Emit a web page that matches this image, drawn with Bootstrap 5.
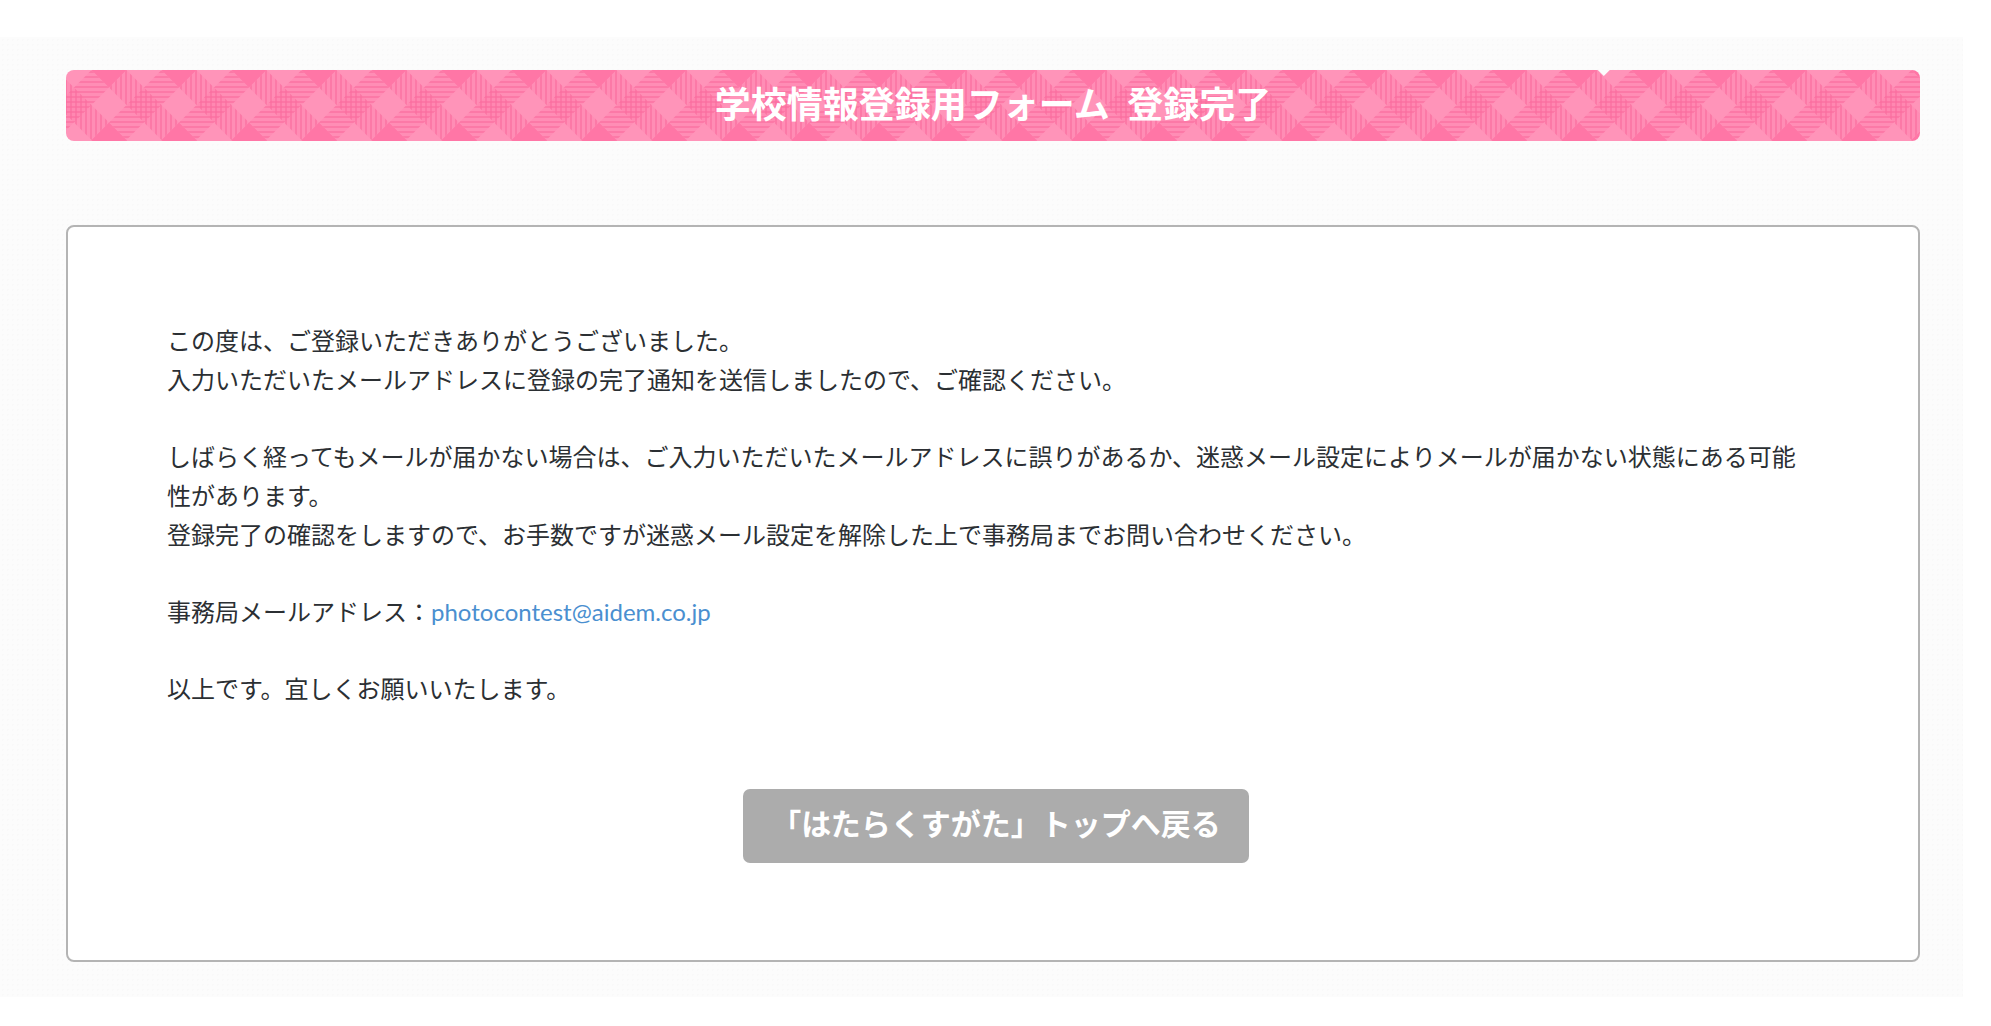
<!DOCTYPE html>
<html lang="ja">
<head>
<meta charset="utf-8">
<meta name="viewport" content="width=device-width, initial-scale=1">
<title>学校情報登録用フォーム 登録完了</title>
<link href="https://cdn.jsdelivr.net/npm/bootstrap@5.3.0/dist/css/bootstrap.min.css" rel="stylesheet">
<style>
  body {
    background: #fff;
    color: #2b2f33;
    font-family: Lato, "Noto Sans CJK JP", sans-serif;
    font-size: 24px;
    line-height: 39px;
  }
  .page-sheet {
    margin: 37px 28px 26px 0;
    padding: 33px 43px 35px 66px;
    background-color: #fcfcfc;
    background-image: radial-gradient(#f9f9f9 1px, transparent 1px);
    background-size: 5px 5px;
  }
  /* Diagonal gingham ribbon, 70px repeat */
  .title-ribbon {
    min-height: 71px;
    margin-bottom: 84px;
    border-radius: 8px;
    background: #ff94b9 url("data:image/svg+xml,%3Csvg xmlns='http://www.w3.org/2000/svg' width='70' height='70'%3E%3Cdefs%3E%3Cpattern id='h' width='5' height='5' patternUnits='userSpaceOnUse'%3E%3Cpath d='M0 1h5v2H0z' fill='%23fa6c9e' fill-opacity='.6'/%3E%3C/pattern%3E%3Cpattern id='v' width='5' height='5' patternUnits='userSpaceOnUse'%3E%3Cpath d='M1 0h2v5H1z' fill='%23fa6c9e' fill-opacity='.6'/%3E%3C/pattern%3E%3C/defs%3E%3Cpath d='M27 0h36L45 18zM27 70h36L45 52z' fill='%23ff76a6'/%3E%3Cpath d='M10 17.500L27.500 0 45 17.500 27.500 35 45 52.500 27.500 70 10 52.500 27.500 35zM45 17.500L62.500 0 70 7.500V27.500L62.500 35 70 42.500V62.500L62.500 70 45 52.500 62.500 35zM0 7.500L10 17.500 0 27.500zM0 42.500L10 52.500 0 62.500z' fill='%23ff8db5'/%3E%3Cpath d='M10 17.500L27.500 35 10 52.500 0 42.500V27.500zM70 27.500L62.500 35 70 42.500z' fill='%23ff88b1'/%3E%3Cpath d='M10 17.500L27.500 0 45 17.500 27.500 35 10 52.500 0 42.500V27.500zM45 52.500L62.500 35 70 42.500V62.500L62.500 70zM0 42.500L10 52.500 0 62.500zM70 27.500L62.500 35 70 42.500z' fill='url(%23h)'/%3E%3Cpath d='M45 17.500L62.500 0 70 7.500V42.500L62.500 35zM0 7.500L10 17.500 27.500 35 45 52.500 27.500 70 10 52.500 0 42.500z' fill='url(%23v)'/%3E%3C/svg%3E") -2px 0;
  }
  .title-ribbon h1 {
    font-size: 36px;
    line-height: 48px;
    font-weight: 700;
  }
  .ribbon-notch {
    top: 0;
    left: 83%;
    width: 12px;
    height: 6px;
    margin-left: -7px;
    background: #fcfcfc;
    clip-path: polygon(0 0, 100% 0, 50% 100%);
  }
  .message-panel {
    padding: 94px 99px 97px;
    border: 2px solid #b4b4b4;
    border-radius: 8px;
  }
  .message-panel p { margin-bottom: 38px; }
  .message-panel a:not(.btn) { color: #4a8fd0; }
  .return-row { padding: 43px 0 0 6px; }
  .btn-return {
    --bs-btn-color: #fff;
    --bs-btn-bg: #acacac;
    --bs-btn-hover-color: #fff;
    --bs-btn-hover-bg: #999;
    --bs-btn-border-width: 0;
    --bs-btn-border-radius: 7px;
    --bs-btn-padding-x: 28px;
    --bs-btn-padding-y: 12px;
    --bs-btn-font-size: 30px;
    --bs-btn-font-weight: 700;
    --bs-btn-line-height: 44px;
    padding-bottom: 18px;
  }
</style>
</head>
<body>
<main class="page-sheet">
  <header class="title-ribbon position-relative d-flex align-items-center justify-content-center text-white text-center">
    <span class="ribbon-notch position-absolute"></span>
    <h1 class="m-0 pb-1">学校情報登録用フォーム&nbsp; 登録完了</h1>
  </header>
  <section class="message-panel bg-white">
    <p>この度は、ご登録いただきありがとうございました。<br>
    入力いただいたメールアドレスに登録の完了通知を送信しましたので、ご確認ください。</p>
    <p>しばらく経ってもメールが届かない場合は、ご入力いただいたメールアドレスに誤りがあるか、迷惑メール設定によりメールが届かない状態にある可能性があります。<br>
    登録完了の確認をしますので、お手数ですが迷惑メール設定を解除した上で事務局までお問い合わせください。</p>
    <p>事務局メールアドレス：<a class="text-decoration-none" href="mailto:photocontest@aidem.co.jp">photocontest@aidem.co.jp</a></p>
    <p>以上です。宜しくお願いいたします。</p>
    <div class="return-row d-flex justify-content-center">
      <button type="button" class="btn btn-return">「はたらくすがた」トップへ戻る</button>
    </div>
  </section>
</main>
<script src="https://cdn.jsdelivr.net/npm/bootstrap@5.3.0/dist/js/bootstrap.bundle.min.js"></script>
</body>
</html>
